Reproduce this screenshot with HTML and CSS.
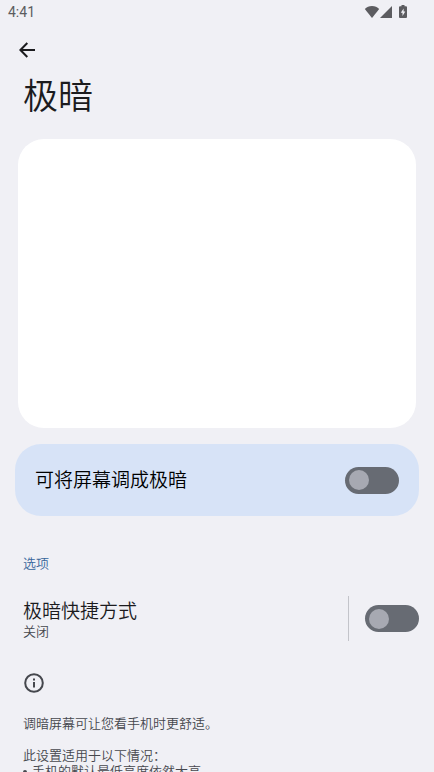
FILE: index.html
```html
<!DOCTYPE html>
<html lang="zh-CN">

<head>
  <meta charset="UTF-8" />
  <meta name="viewport" content="width=device-width, initial-scale=1.0" />
  <link rel="stylesheet" href="styles.css">
  <title>极暗</title>
</head>

<body>
  <div class="status-bar">
    <span>4:41</span>
    <div class="status-icons">
      <svg width="16" height="14" viewBox="0 0 16 14">
        <path fill="currentColor" d="M8 13L.8 3.9C2.6 2.2 5.1 1 8 1s5.400 1.200 7.200 2.900z" />
      </svg>
      <svg width="12" height="14" viewBox="0 0 12 14">
        <path fill="currentColor" d="M12 1v12H0z" />
      </svg>
      <svg class="battery" width="8" height="14" viewBox="0 0 8 14">
        <path fill="currentColor" fill-rule="evenodd"
          d="M2.500 0h3v1.300H7q1 0 1 1V12q0 1-1 1H1q-1 0-1-1V2.300q0-1 1-1h1.500zM4.600 3.500L1.800 7.800h1.700v3.200l2.800-4.400H4.600z" />
      </svg>
    </div>
  </div>

  <header class="toolbar">
    <button class="back" aria-label="返回">
      <svg width="16" height="16" viewBox="0 0 16 16">
        <path fill="none" stroke="currentColor" stroke-width="2" d="M16 8H2M8.300 1L1.400 8l6.900 7" />
      </svg>
    </button>
    <h1>极暗</h1>
  </header>

  <main>
    <div class="preview"></div>

    <label class="main-switch">
      <span class="row-title">可将屏幕调成极暗</span>
      <input type="checkbox" role="switch" class="switch">
    </label>

    <h2>选项</h2>

    <div class="row">
      <label class="row-text" for="shortcut">
        <span class="row-title">极暗快捷方式</span>
        <span class="summary">关闭</span>
      </label>
      <div class="row-widget">
        <input type="checkbox" role="switch" class="switch" id="shortcut">
      </div>
    </div>

    <footer class="info">
      <svg width="22" height="22" viewBox="0 0 22 22">
        <circle cx="11" cy="11" r="8.800" fill="none" stroke="currentColor" stroke-width="2" />
        <path fill="currentColor" d="M10 10h2v5.500h-2zM10 6.500h2v2h-2z" />
      </svg>
      <p>调暗屏幕可让您看手机时更舒适。</p>
      <p>此设置适用于以下情况：</p>
      <ul>
        <li>手机的默认最低亮度依然太高</li>
      </ul>
    </footer>
  </main>
</body>

</html>
```
FILE: styles.css
```css
*,
*::after,
*::before {
  box-sizing: border-box;
}

body {
  margin: 0;
  height: 100vh;
  overflow: hidden;
  background-color: #f0f0f5;
  color: #1b1b1e;
  font-family: Roboto, "Noto Sans CJK SC", sans-serif;
  font-weight: 350;
}

.status-bar {
  display: flex;
  justify-content: space-between;
  align-items: center;
  height: 24px;
  padding: 0 27px 0 8px;
  color: #5c5c60;
  font-size: 14px;
  font-weight: 400;
}

.status-icons {
  display: flex;
  align-items: center;
}

.battery {
  margin-left: 7px;
}

.toolbar {
  padding: 14px 23px 0 15px;
}

.back {
  display: flex;
  align-items: center;
  justify-content: center;
  width: 24px;
  height: 24px;
  border: none;
  padding: 0;
  background: none;
  color: inherit;
  cursor: pointer;
}

h1 {
  margin: 12px 0 0 8px;
  font-size: 35px;
  font-weight: inherit;
  line-height: 48px;
}

.preview {
  height: 289px;
  margin: 17px 18px 16px;
  border-radius: 26px;
  background-color: white;
}

.main-switch {
  display: flex;
  justify-content: space-between;
  align-items: center;
  height: 72px;
  margin: 0 15px;
  padding: 0 20px;
  border-radius: 26px;
  background-color: #d7e3f7;
  color: black;
  cursor: pointer;
}

.row-title {
  padding-top: 2px;
  font-size: 19px;
  line-height: 24px;
}

.switch {
  appearance: none;
  display: flex;
  align-items: center;
  width: 54px;
  height: 27px;
  margin: 0;
  padding: 0 4px;
  border-radius: 14px;
  background-color: #676b73;
  cursor: pointer;
}

.switch::before {
  content: "";
  width: 20px;
  height: 20px;
  border-radius: 50%;
  background-color: #a7a9b2;
}

.switch:checked {
  justify-content: flex-end;
  background-color: #38618f;
}

h2 {
  margin: 40px 23px 24px;
  color: #38669b;
  font-size: 13px;
  font-weight: inherit;
  line-height: 16px;
}

.row {
  display: flex;
  align-items: center;
  padding: 0 15px 0 23px;
}

.row-text {
  display: flex;
  flex-direction: column;
  flex-grow: 1;
}

.row-widget {
  display: flex;
  align-items: center;
  height: 45px;
  padding-left: 16px;
  border-left: 1px solid #c3c4ca;
}

.summary,
.info {
  color: #45474d;
  font-size: 13px;
  line-height: 16px;
}

.info {
  padding: 31px 23px;
}

.info svg {
  display: block;
  margin-bottom: 22px;
}

.info p {
  margin: 0 0 16px;
}

.info ul {
  margin: -16px 0 0;
  padding: 0;
  list-style: none;
}

.info li {
  display: flex;
  align-items: center;
  gap: 5px;
}

.info li::before {
  content: "";
  width: 4px;
  height: 4px;
  border-radius: 50%;
  background-color: currentColor;
}
```
